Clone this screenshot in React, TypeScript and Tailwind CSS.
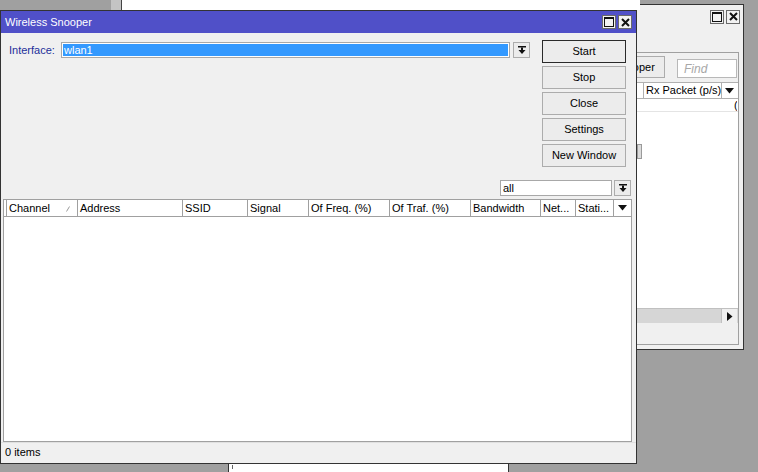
import React from "react";

const ComboArrow = () => (
  <svg width="8" height="9" viewBox="0 0 8 9" className="block">
    <rect x="0" y="0" width="8" height="1.5" fill="#111" />
    <rect x="3" y="1.5" width="2" height="3" fill="#111" />
    <polygon points="0.5,4 7.5,4 4,8" fill="#111" />
  </svg>
);

const DownTri = () => (
  <svg width="9" height="6" viewBox="0 0 9 6" className="block">
    <polygon points="0,0 9,0 4.5,5.5" fill="#111" />
  </svg>
);

const RightTri = () => (
  <svg width="6" height="9" viewBox="0 0 6 9" className="block">
    <polygon points="0,0 5.5,4.5 0,9" fill="#111" />
  </svg>
);

const MaxIcon = () => (
  <svg width="10" height="10" viewBox="0 0 10 10" className="block">
    <rect x="0.5" y="0.5" width="9" height="9" fill="none" stroke="#111" strokeWidth="1" />
    <rect x="0" y="0" width="10" height="2" fill="#111" />
  </svg>
);

const CloseIcon = () => (
  <svg width="9" height="9" viewBox="0 0 9 9" className="block">
    <path d="M1 1 L8 8 M8 1 L1 8" stroke="#111" strokeWidth="2" />
  </svg>
);

const TitleBtn = ({ kind }: { kind: "max" | "close" }) => (
  <div className="w-[14px] h-[14px] bg-[#f2f2f2] border border-[#6a6a6a] flex items-center justify-center">
    {kind === "max" ? <MaxIcon /> : <CloseIcon />}
  </div>
);

const Btn = ({ label, def }: { label: string; def?: boolean }) => (
  <div
    className={
      "h-[23px] flex items-center justify-center bg-[#ececec] text-[11px] text-black " +
      (def ? "border border-[#2a2a2a]" : "border border-[#acacac]")
    }
  >
    {label}
  </div>
);

const cols = [
  { w: 3, label: "" },
  { w: 71, label: "Channel", sort: true },
  { w: 105, label: "Address" },
  { w: 65, label: "SSID" },
  { w: 61, label: "Signal" },
  { w: 81, label: "Of Freq. (%)" },
  { w: 81, label: "Of Traf. (%)" },
  { w: 70, label: "Bandwidth" },
  { w: 35, label: "Net..." },
  { w: 38, label: "Stati..." },
];

export default function App() {
  return (
    <div className="relative w-[758px] h-[472px] bg-[#a0a0a0] overflow-hidden font-['Liberation_Sans',Arial,sans-serif] text-[11px] text-black">
      {/* Right background window */}
      <div className="absolute left-[560px] top-[4px] w-[184px] h-[346px] border border-[#333] bg-[#f0f0f0] flex flex-col">
        <div className="h-[23px] flex items-center justify-end pr-[3px] gap-[2px] shrink-0">
          <TitleBtn kind="max" />
          <TitleBtn kind="close" />
        </div>
        <div className="mt-[24px] ml-[19px] mr-[4px] mb-[4px] flex-1 border border-[#a0a0a0] bg-[#f0f0f0] flex flex-col">
          <div className="h-[29px] flex items-start shrink-0">
            <div className="ml-[22px] mt-[3px] w-[62px] h-[22px] border border-[#acacac] bg-[#ececec] flex items-center justify-center">
              Snooper
            </div>
            <div className="ml-auto mr-[1px] mt-[6px] w-[60px] h-[19px] border border-[#b8b8b8] bg-white flex items-center pl-[6px] italic text-[#a8a8a8] text-[12px]">
              Find
            </div>
          </div>
          <div className="h-[17px] flex justify-end bg-white border-t border-b border-[#b0b0b0] shrink-0">
            <div className="w-[79px] border-l border-r border-[#b0b0b0] flex items-center pl-[2px] whitespace-nowrap overflow-hidden">
              Rx Packet (p/s)
            </div>
            <div className="w-[15px] mr-[1px] flex items-center justify-center">
              <DownTri />
            </div>
          </div>
          <div className="flex-1 bg-white flex flex-col">
            <div className="h-[13px] border-b border-[#e4e4e4] flex justify-end items-center pr-[1px] text-[11px]">
              <span className="w-[3px] overflow-hidden leading-none">(</span>
            </div>
          </div>
          <div className="h-[15px] bg-[#d6d6d6] border-t border-[#c0c0c0] flex justify-end shrink-0">
            <div className="w-[16px] mr-[1px] bg-[#f0f0f0] border-l border-[#c0c0c0] flex items-center justify-center">
              <RightTri />
            </div>
          </div>
          <div className="h-[21px] shrink-0" />
        </div>
        <div className="absolute left-[76px] top-[139px] w-[5px] h-[15px] bg-[#dcdcdc] border border-[#9a9a9a]" />
      </div>

      {/* Top background window strip */}
      <div className="absolute left-[111px] top-0 w-[10px] h-[10px] bg-[#c4c4c4]" />
      <div className="absolute left-[121px] top-0 w-[1px] h-[10px] bg-[#444]" />
      <div className="absolute left-[122px] top-0 w-[518px] h-[10px] bg-white" />

      {/* Bottom background window */}
      <div className="absolute left-[228px] top-[463px] w-[281px] h-[12px] bg-white border border-[#333]">
        <div className="ml-[3px] mt-[1px] w-[1px] h-[4px] bg-[#666]" />
      </div>

      {/* Main window */}
      <div className="absolute left-0 top-[10px] w-[637px] h-[454px] border border-[#333] bg-[#f0f0f0] flex flex-col">
        <div className="h-[22px] bg-[#5050c8] flex items-center justify-between pl-[4px] pr-[4px] shrink-0">
          <span className="text-white text-[11px]">Wireless Snooper</span>
          <div className="flex gap-[2px]">
            <TitleBtn kind="max" />
            <TitleBtn kind="close" />
          </div>
        </div>

        <div className="h-[166px] flex flex-col shrink-0">
          <div className="flex items-start">
            <div className="flex-1 flex items-center pl-[8px] pt-[9px]">
              <div className="w-[52px] text-[#1d2f9a]">Interface:</div>
              <div className="flex-1 h-[16px] border border-[#a8a8a8] bg-white p-[1px]">
                <div className="h-full bg-[#3399ff] text-white flex items-center pl-[1px] leading-none">wlan1</div>
              </div>
              <div className="ml-[3px] w-[17px] h-[16px] border border-[#acacac] bg-[#ececec] flex items-center justify-center">
                <ComboArrow />
              </div>
            </div>
            <div className="w-[84px] ml-[12px] mr-[10px] pt-[7px] flex flex-col gap-[3px]">
              <Btn label="Start" def />
              <Btn label="Stop" />
              <Btn label="Close" />
              <Btn label="Settings" />
              <Btn label="New Window" />
            </div>
          </div>
          <div className="mt-auto mb-[3px] flex justify-end pr-[5px]">
            <div className="w-[112px] h-[16px] border border-[#a8a8a8] bg-white flex items-center pl-[2px] leading-none">all</div>
            <div className="ml-[2px] w-[17px] h-[16px] border border-[#acacac] bg-[#ececec] flex items-center justify-center">
              <ComboArrow />
            </div>
          </div>
        </div>

        <div className="h-[243px] ml-[2px] mr-[4px] border border-[#a0a0a0] bg-white flex flex-col shrink-0">
          <div className="h-[17px] flex border-b border-[#a0a0a0] shrink-0">
            {cols.map((c, i) => (
              <div
                key={i}
                style={{ width: c.w }}
                className="h-full border-r border-[#a0a0a0] flex items-center pl-[2px] whitespace-nowrap overflow-hidden relative shrink-0"
              >
                {c.label}
                {c.sort && (
                  <svg width="4" height="6" viewBox="0 0 4 6" className="absolute right-[7px] top-[6px]">
                    <path d="M0.5 5.5 L3.5 0.5" stroke="#9a9a9a" strokeWidth="1" />
                  </svg>
                )}
              </div>
            ))}
            <div className="flex-1 flex items-center justify-center">
              <DownTri />
            </div>
          </div>
          <div className="flex-1 bg-white" />
        </div>

        <div className="flex-1 flex items-center pl-[4px] pb-[1px] border-t border-[#e0e0e0]">0 items</div>
      </div>
    </div>
  );
}
